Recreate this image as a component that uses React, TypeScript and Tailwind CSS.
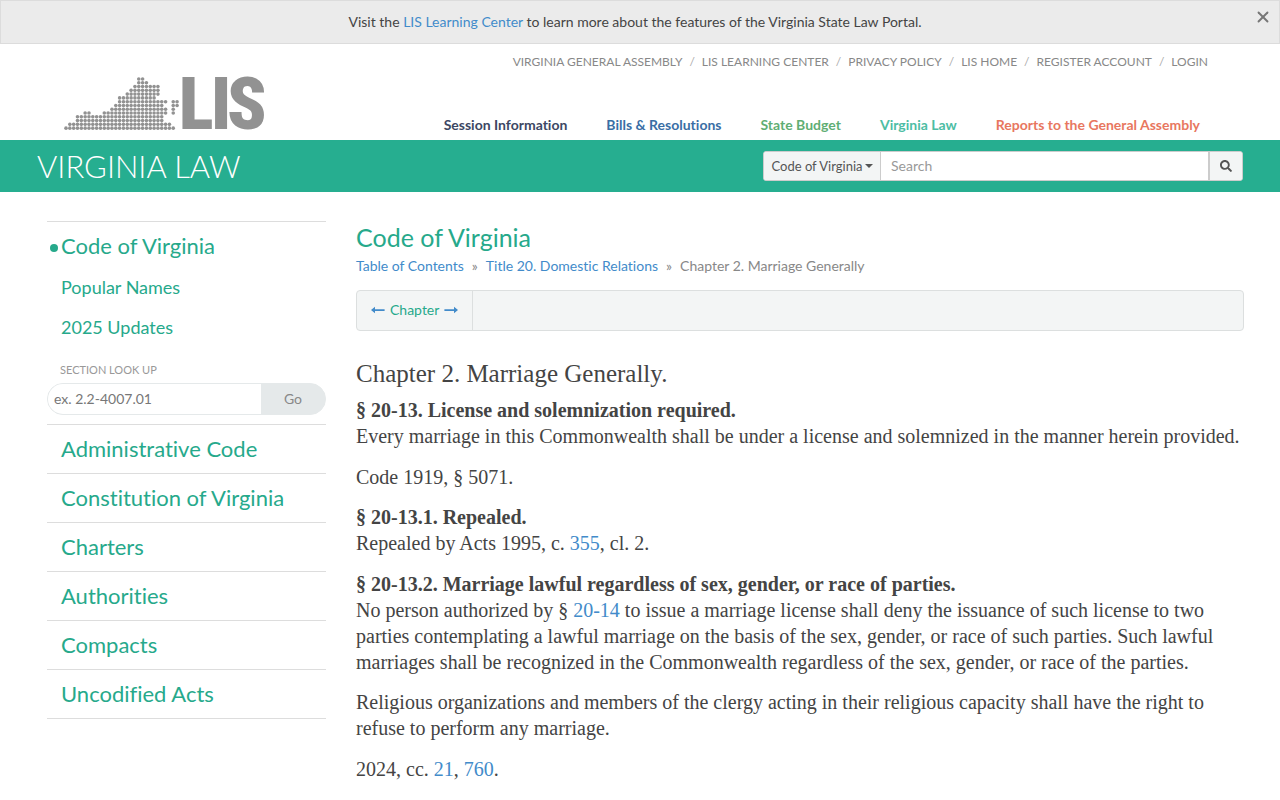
import { X } from "lucide-react";
import { FaSearch } from "react-icons/fa";

const utilityLinks = [
  "Virginia General Assembly",
  "LIS Learning Center",
  "Privacy Policy",
  "LIS Home",
  "Register Account",
  "Login",
];

const portalLinks = [
  { label: "Session Information", color: "text-[#3c4763]" },
  { label: "Bills & Resolutions", color: "text-[#3a6ea5]" },
  { label: "State Budget", color: "text-[#5fae74]" },
  { label: "Virginia Law", color: "text-[#4dbda4]" },
  { label: "Reports to the General Assembly", color: "text-[#e8775f]" },
];

const lawLinks = [
  "Administrative Code",
  "Constitution of Virginia",
  "Charters",
  "Authorities",
  "Compacts",
  "Uncodified Acts",
];

// Dot map of the state, top row first: [from column, to column] runs
const mapRows = [
  [[19, 20]],
  [[19, 21]],
  [[18, 24]],
  [[17, 24]],
  [[16, 24]],
  [[14, 23]],
  [[14, 26], [28, 29]],
  [[13, 25], [28, 29]],
  [[12, 26], [28, 28]],
  [[5, 6], [10, 26], [28, 28]],
  [[3, 25]],
  [[3, 25]],
  [[1, 27]],
  [[0, 28]],
];

function Logo() {
  return (
    <svg
      viewBox="0 0 204 60"
      className="h-[60px] w-[204px] overflow-visible"
      role="img"
      aria-label="LIS"
    >
      <g fill="#929292">
        {mapRows.map((runs, row) =>
          runs.map(([from, to]) =>
            Array.from({ length: to - from + 1 }, (_, i) => (
              <circle
                key={`${row}-${from + i}`}
                cx={2 + (from + i) * 3.83}
                cy={6 + row * 3.78}
                r={1.8}
              />
            )),
          ),
        )}
        <text
          x="115 147 163"
          y="56"
          fontFamily="'Roboto Condensed', Roboto, sans-serif"
          fontWeight="900"
          fontSize="72"
        >
          LIS
        </text>
      </g>
    </svg>
  );
}

function ArrowLeft() {
  return (
    <svg viewBox="0 0 14 8" className="h-2 w-[14px]" fill="currentColor">
      <path d="M0 4 4 .8v2.4h9.6v1.7H4v2.3z" />
    </svg>
  );
}

function ArrowRight() {
  return (
    <svg viewBox="0 0 14 8" className="h-2 w-[14px]" fill="currentColor">
      <path d="M14 4 10 .8v2.4H.4v1.7H10v2.3z" />
    </svg>
  );
}

function Link({ children }: { children: string }) {
  return (
    <a href="#" className="text-[#428bca]">
      {children}
    </a>
  );
}

function Sidebar() {
  return (
    <aside className="w-[279px] shrink-0 text-[#26a98b]">
      <div className="border-y border-[#dddddd]">
        <a href="#" className="flex items-center pt-2 text-[22px] leading-8">
          <span className="flex w-[14px] justify-center">
            <span className="mt-1 h-2 w-2 rounded-full bg-[#26a98b]" />
          </span>
          Code of Virginia
        </a>
        <a href="#" className="mt-[5px] block pl-[14px] text-lg leading-10">
          Popular Names
        </a>
        <a href="#" className="block pl-[14px] text-lg leading-10">
          2025 Updates
        </a>
        <form className="pt-[13px] pb-[9px]" onSubmit={(e) => e.preventDefault()}>
          <label htmlFor="section" className="block pl-[13px] text-[11px] leading-5 text-[#999999]">
            SECTION LOOK UP
          </label>
          <div className="mt-[3px] flex h-8 overflow-hidden rounded-full border border-[#e5e9ea] bg-[#e5e9ea]">
            <input
              id="section"
              placeholder="ex. 2.2-4007.01"
              className="min-w-0 flex-1 bg-white px-[6px] text-sm outline-none placeholder:text-[#777777]"
            />
            <button className="w-16 text-sm text-[#888888]">Go</button>
          </div>
        </form>
      </div>
      {lawLinks.map((label) => (
        <a
          key={label}
          href="#"
          className="block border-b border-[#dddddd] pl-[14px] text-[22px] leading-[48px]"
        >
          {label}
        </a>
      ))}
    </aside>
  );
}

export default function App() {
  return (
    <div className="min-h-screen bg-white font-['Lato',sans-serif] text-[#444444] [font-variant-ligatures:none]">
      {/* Announcement */}
      <div className="flex h-11 items-center border border-[#dcdcdc] bg-[#ebebeb] text-sm">
        <p className="flex-1 pl-[22px] text-center">
          Visit the <Link>LIS Learning Center</Link> to learn more about the features of the
          Virginia State Law Portal.
        </p>
        <button aria-label="Close" className="mb-[10px] w-8 pl-[7px] text-[#777777]">
          <X className="h-[18px] w-[18px]" strokeWidth={2.5} />
        </button>
      </div>

      <header>
        <div className="flex h-24 items-end justify-between pr-[72px] pl-16">
          <div className="pb-[7px]">
            <Logo />
          </div>
          <div className="flex h-full flex-col items-end justify-between">
            <nav className="flex pt-2 text-xs leading-5 text-[#888888] uppercase">
              {utilityLinks.map((label, i) => (
                <span key={label}>
                  {i > 0 && <span className="px-[7px] text-[#aaaaaa]">/</span>}
                  <a href="#">{label}</a>
                </span>
              ))}
            </nav>
            <nav className="flex gap-[39px] pr-2 pb-[5px] text-sm leading-5 font-bold">
              {portalLinks.map((link) => (
                <a key={link.label} href="#" className={link.color}>
                  {link.label}
                </a>
              ))}
            </nav>
          </div>
        </div>

        <div className="flex h-[52px] items-center justify-between bg-[#26ae90] px-[37px]">
          <h1 className="text-[31px] font-light text-white">VIRGINIA LAW</h1>
          <form
            className="flex h-[30px] w-[480px] overflow-hidden rounded-[3px] border border-[#cccccc] bg-white text-sm text-[#555555]"
            onSubmit={(e) => e.preventDefault()}
          >
            <button
              type="button"
              className="flex w-[117px] items-center justify-center gap-[2px] border-r border-[#cccccc] bg-[#f3f5f5] text-[13px]"
            >
              Code of Virginia
              <svg viewBox="0 0 8 4" className="h-1 w-2" fill="currentColor">
                <path d="M0 0h8L4 4z" />
              </svg>
            </button>
            <input
              aria-label="Search"
              placeholder="Search"
              className="min-w-0 flex-1 px-[10px] outline-none placeholder:text-[#999999]"
            />
            <button
              aria-label="Submit search"
              className="flex w-[34px] items-center justify-center border-l-2 border-[#cccccc] bg-[#f3f5f5]"
            >
              <FaSearch className="h-3 w-3" />
            </button>
          </form>
        </div>
      </header>

      <div className="flex gap-[30px] pt-[29px] pr-9 pl-[47px]">
        <Sidebar />

        <main className="min-w-0 flex-1">
          <h2 className="text-[25px] leading-8 text-[#26a98b]">Code of Virginia</h2>
          <nav className="mt-[3px] text-sm leading-5 text-[#888888]">
            <Link>Table of Contents</Link>
            <span className="px-2">»</span>
            <Link>Title 20. Domestic Relations</Link>
            <span className="px-2">»</span>
            Chapter 2. Marriage Generally
          </nav>

          <div className="mt-[14px] flex h-[41px] rounded-[4px] border border-[#dcdfdf] bg-[#f3f5f5] text-sm">
            <div className="flex items-center gap-[5px] border-r border-[#dcdfdf] px-[14px] pb-[2px] text-[#428bca]">
              <a href="#" aria-label="Previous chapter">
                <ArrowLeft />
              </a>
              <a href="#" className="text-[#26a98b]">
                Chapter
              </a>
              <a href="#" aria-label="Next chapter">
                <ArrowRight />
              </a>
            </div>
          </div>

          <article className="pt-7 font-['Liberation_Serif',serif] text-[20px] leading-[26px]">
            <h2 className="mb-2 text-[25px] leading-[30px]">Chapter 2. Marriage Generally.</h2>

            <h3 className="font-bold">§ 20-13. License and solemnization required.</h3>
            <p className="mb-[15px]">
              Every marriage in this Commonwealth shall be under a license and solemnized in the
              manner herein provided.
            </p>
            <p className="mb-[14px]">Code 1919, § 5071.</p>

            <h3 className="font-bold">§ 20-13.1. Repealed.</h3>
            <p className="mb-[15px]">
              Repealed by Acts 1995, c. <Link>355</Link>, cl. 2.
            </p>

            <h3 className="font-bold">
              § 20-13.2. Marriage lawful regardless of sex, gender, or race of parties.
            </h3>
            <p className="mb-[14px]">
              No person authorized by § <Link>20-14</Link> to issue a marriage license shall deny
              the issuance of such license to two parties contemplating a lawful marriage on the
              basis of the sex, gender, or race of such parties. Such lawful marriages shall be
              recognized in the Commonwealth regardless of the sex, gender, or race of the parties.
            </p>
            <p className="mb-[15px]">
              Religious organizations and members of the clergy acting in their religious capacity
              shall have the right to refuse to perform any marriage.
            </p>
            <p>
              2024, cc. <Link>21</Link>, <Link>760</Link>.
            </p>
          </article>
        </main>
      </div>
    </div>
  );
}
